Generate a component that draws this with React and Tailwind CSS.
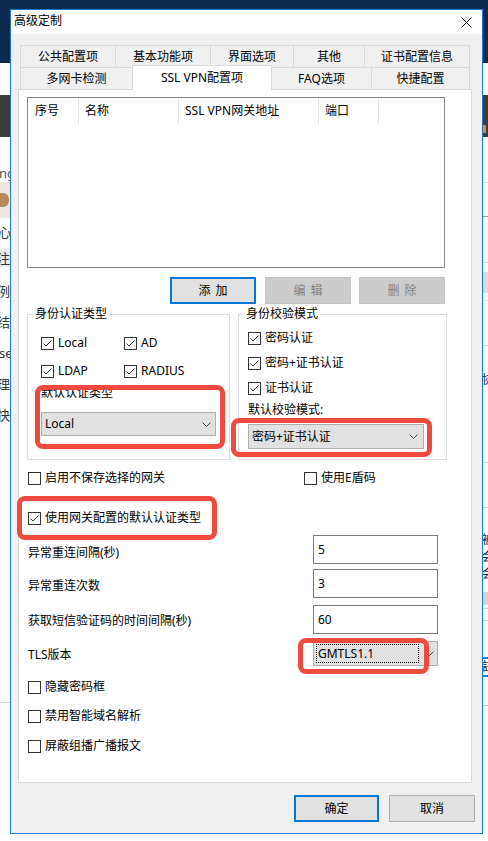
import React from "react";

function Check({ checked }) {
  return (
    <span className="w-[13px] h-[13px] border border-[#333333] bg-white flex items-center justify-center shrink-0">
      {checked && (
        <svg width="11" height="11" viewBox="0 0 11 11">
          <polyline points="1.5,5.5 4,8 9.5,2.5" fill="none" stroke="#333333" strokeWidth="1" />
        </svg>
      )}
    </span>
  );
}

function CheckLabel({ checked, children, className = "" }) {
  return (
    <div className={"flex items-center gap-[4px] h-[20px] " + className}>
      <Check checked={checked} />
      <span>{children}</span>
    </div>
  );
}

function Chevron() {
  return (
    <svg width="9" height="5" viewBox="0 0 9 5" className="shrink-0">
      <polyline points="0.5,0.5 4.5,4.5 8.5,0.5" fill="none" stroke="#404040" strokeWidth="1" />
    </svg>
  );
}

function LeftStrip() {
  return (
    <div className="w-[40px] flex flex-col text-[13px] leading-[16px] text-[#333333] overflow-hidden">
      <div className="h-[27px]" />
      <div className="h-[18px] flex items-center text-[#555555] -ml-[1px]">ng</div>
      <div className="h-[36px] bg-[#efe6dc] flex items-center">
        <div className="w-[9px] h-[14px] bg-[#b98a5e] rounded-r-[6px]" />
      </div>
      <div className="h-[28px] flex items-center -ml-[2px]">心</div>
      <div className="h-[2px]" />
      <div className="h-[19px] bg-[#ebebeb] flex items-center -ml-[3px]">注</div>
      <div className="h-[8px]" />
      <div className="h-[31px] flex items-center -ml-[3px]">例</div>
      <div className="h-[31px] flex items-center -ml-[3px]">结</div>
      <div className="h-[31px] flex items-center -ml-[1px]">se</div>
      <div className="h-[31px] flex items-center -ml-[3px]">理</div>
      <div className="h-[31px] flex items-center -ml-[3px]">快</div>
      <div className="h-[272px]" />
      <div className="h-[1px] bg-[#d5d5d5]" />
    </div>
  );
}

function RightStrip() {
  return (
    <div className="w-[6px] flex flex-col text-[12px] leading-[16px] text-[#222222] overflow-hidden">
      <div className="h-[45px]" />
      <div className="h-[1px] bg-[#e3e3e3]" />
      <div className="h-[33px]" />
      <div className="h-[1px] bg-[#9a9a9a]" />
      <div className="h-[45px] bg-[#fafafa]" />
      <div className="h-[1px] bg-[#e0e0e0]" />
      <div className="h-[9px]" />
      <div className="h-[21px] bg-[#dcdcdc]" />
      <div className="h-[7px]" />
      <div className="h-[1px] bg-[#e0e0e0]" />
      <div className="h-[44px]" />
      <div className="h-[1px] bg-[#cfcfcf]" />
      <div className="h-[26px]" />
      <div className="h-[16px]">协</div>
      <div className="h-[74px]" />
      <div className="h-[1px] bg-[#d0d0d0]" />
      <div className="h-[44px]" />
      <div className="h-[1px] bg-[#d0d0d0]" />
      <div className="h-[24px]" />
      <div className="h-[17px]">被</div>
      <div className="h-[17px]">会</div>
      <div className="h-[17px]">会</div>
      <div className="h-[9px]" />
      <div className="h-[13px] bg-[#d4d4d4]" />
      <div className="h-[3px]" />
      <div className="h-[1px] bg-[#d0d0d0]" />
      <div className="h-[11px]" />
      <div className="h-[1px] bg-[#d0d0d0]" />
      <div className="h-[36px]" />
      <div className="h-[2px] bg-[#1a7fd4]" />
      <div className="h-[16px]">註</div>
      <div className="h-[2px] bg-[#1a7fd4]" />
      <div className="h-[28px]" />
      <div className="h-[1px] bg-[#c8c8c8]" />
    </div>
  );
}

function Tab({ w, children, last }) {
  return (
    <div
      className={
        "h-[22px] border-l border-t border-[#d9d9d9] flex items-center justify-center " +
        w +
        (last ? " border-r" : "")
      }
    >
      {children}
    </div>
  );
}

function Dialog() {
  return (
    <div className="absolute left-[10px] top-[9px] w-[473px] h-[825px] border border-[#1a7ad4] bg-[#f0f0f0] flex flex-col">
      {/* title bar */}
      <div className="h-[24px] bg-white flex items-center justify-between pl-[3px] pr-[10px] shrink-0">
        <span className="pb-[2px]">高级定制</span>
        <svg width="11" height="11" viewBox="0 0 11 11">
          <path d="M0.5 0.5 L10.5 10.5 M10.5 0.5 L0.5 10.5" stroke="#000000" strokeWidth="1" fill="none" />
        </svg>
      </div>

      <div className="pt-[11px] pl-[7px]">
        <div className="w-[454px]">
          <div className="ml-[2px] w-[450px]">
            <div className="flex">
              <Tab w="w-[95px]">公共配置项</Tab>
              <Tab w="w-[95px]">基本功能项</Tab>
              <Tab w="w-[83px]">界面选项</Tab>
              <Tab w="w-[71px]">其他</Tab>
              <Tab w="w-[106px]" last>证书配置信息</Tab>
            </div>
            <div className="flex items-start h-[22px]">
              <div className="w-[112px] h-[22px] border-l border-t border-[#d9d9d9] flex items-center justify-center">
                多网卡检测
              </div>
              <div className="w-[140px] h-[25px] -mt-[2px] relative z-10 bg-white border-l border-t border-r border-[#d9d9d9] flex items-center justify-center">
                SSL VPN配置项
              </div>
              <div className="w-[99px] h-[22px] border-t border-[#d9d9d9] flex items-center justify-center">
                FAQ选项
              </div>
              <div className="w-[99px] h-[22px] border-l border-t border-r border-[#d9d9d9] flex items-center justify-center">
                快捷配置
              </div>
            </div>
          </div>

          {/* panel */}
          <div className="h-[694px] border border-[#d9d9d9] bg-white pt-[7px]">
            <div className="ml-[8px] w-[418px] h-[171px] border border-[#828790] bg-white">
              <div className="flex h-[26px]">
                <div className="w-[51px] h-full border-r border-[#e5e5e5] pl-[7px] flex items-center">序号</div>
                <div className="w-[100px] h-full border-r border-[#e5e5e5] pl-[6px] flex items-center">名称</div>
                <div className="w-[140px] h-full border-r border-[#e5e5e5] pl-[6px] flex items-center">SSL VPN网关地址</div>
                <div className="w-[60px] h-full border-r border-[#e5e5e5] pl-[6px] flex items-center">端口</div>
              </div>
            </div>

            {/* list buttons */}
            <div className="mt-[9px] flex justify-end pr-[26px]">
              <div className="w-[86px] h-[27px] border-2 border-[#0078d7] bg-[#e1e1e1] flex items-center justify-center gap-[5px]">
                <span>添</span>
                <span>加</span>
              </div>
              <div className="ml-[9px] w-[86px] h-[27px] border border-[#c4c4c4] bg-[#cccccc] text-[#838383] flex items-center justify-center gap-[5px]">
                <span>编</span>
                <span>辑</span>
              </div>
              <div className="ml-[8px] w-[86px] h-[27px] border border-[#c4c4c4] bg-[#cccccc] text-[#838383] flex items-center justify-center gap-[5px]">
                <span>删</span>
                <span>除</span>
              </div>
            </div>

            {/* groups */}
            <div className="flex gap-[8px] ml-[8px] mt-[3px]">
              <fieldset className="w-[203px] h-[153px] border border-[#dcdcdc]">
                <legend className="ml-[5px] px-[2px] leading-[14px]">身份认证类型</legend>
                <div className="mt-[12px] flex pl-[13px]">
                  <CheckLabel checked className="w-[83px]">Local</CheckLabel>
                  <CheckLabel checked>AD</CheckLabel>
                </div>
                <div className="mt-[8px] flex pl-[13px]">
                  <CheckLabel checked className="w-[83px]">LDAP</CheckLabel>
                  <CheckLabel checked>RADIUS</CheckLabel>
                </div>
                <div className="mt-[5px] h-[14px] pl-[13px]">默认认证类型</div>
                <div className="mt-[12px] ml-[13px] w-[175px] h-[24px] border border-[#adadad] bg-[#e1e1e1] flex items-center justify-between pl-[3px] pr-[4px]">
                  <span>Local</span>
                  <Chevron />
                </div>
              </fieldset>

              <fieldset className="w-[209px] h-[153px] border border-[#dcdcdc]">
                <legend className="ml-[5px] px-[2px] leading-[14px]">身份校验模式</legend>
                <div className="mt-[7px] pl-[9px] flex flex-col gap-[5px]">
                  <CheckLabel checked>密码认证</CheckLabel>
                  <CheckLabel checked>密码+证书认证</CheckLabel>
                  <CheckLabel checked>证书认证</CheckLabel>
                </div>
                <div className="mt-[5px] h-[14px] pl-[9px]">默认校验模式:</div>
                <div className="mt-[7px] ml-[9px] w-[176px] h-[25px] border border-[#adadad] bg-[#e1e1e1] flex items-center justify-between pl-[3px] pr-[5px]">
                  <span>密码+证书认证</span>
                  <Chevron />
                </div>
              </fieldset>
            </div>

            {/* options */}
            <div className="pl-[9px]">
              <div className="mt-[8px] flex">
                <CheckLabel className="w-[276px]">启用不保存选择的网关</CheckLabel>
                <CheckLabel>使用E盾码</CheckLabel>
              </div>
              <div className="mt-[20px] flex">
                <CheckLabel checked>使用网关配置的默认认证类型</CheckLabel>
              </div>

              <div className="mt-[7px] h-[29px] flex">
                <div className="w-[285px] flex items-center pt-[7px]">异常重连间隔(秒)</div>
                <div className="w-[125px] h-full border border-[#7a7a7a] bg-white pl-[4px] flex items-center">5</div>
              </div>
              <div className="mt-[5px] h-[29px] flex">
                <div className="w-[285px] flex items-center pt-[4px]">异常重连次数</div>
                <div className="w-[125px] h-full border border-[#7a7a7a] bg-white pl-[4px] flex items-center">3</div>
              </div>
              <div className="mt-[7px] h-[29px] flex">
                <div className="w-[285px] flex items-center pt-[2px]">获取短信验证码的时间间隔(秒)</div>
                <div className="w-[125px] h-full border border-[#7a7a7a] bg-white pl-[4px] flex items-center">60</div>
              </div>
              <div className="mt-[7px] h-[25px] flex">
                <div className="w-[285px] flex items-center pt-[3px]">TLS版本</div>
                <div className="w-[125px] h-full border border-[#adadad] bg-[#e1e1e1] p-[2px] flex items-center">
                  <div className="w-[103px] h-full border border-dotted border-black flex items-center pl-[1px]">GMTLS1.1</div>
                  <div className="flex-1 flex justify-center pl-[4px]">
                    <Chevron />
                  </div>
                </div>
              </div>

              <CheckLabel className="mt-[11px]">隐藏密码框</CheckLabel>
              <CheckLabel className="mt-[9px]">禁用智能域名解析</CheckLabel>
              <CheckLabel className="mt-[10px]">屏蔽组播广播报文</CheckLabel>
            </div>
          </div>
        </div>
      </div>

      {/* footer buttons */}
      <div className="mt-[12px] flex justify-end pr-[7px] gap-[10px]">
        <div className="w-[85px] h-[27px] border-2 border-[#0078d7] bg-[#e1e1e1] flex items-center justify-center">确定</div>
        <div className="w-[86px] h-[27px] border border-[#adadad] bg-[#e1e1e1] flex items-center justify-center">取消</div>
      </div>
    </div>
  );
}

function Mark({ className }) {
  return <div className={"absolute border-[5px] border-[#ef4a3e] rounded-[8px] " + className} />;
}

export default function App() {
  return (
    <div className="relative w-[488px] h-[841px] overflow-hidden bg-white font-['Noto_Sans','Noto_Sans_CJK_SC',sans-serif] text-[12px] leading-[14px] text-black">
      <div className="flex flex-col h-full">
        <div className="h-[63px] bg-[#0d2b4e] shrink-0" />
        <div className="h-[32px] bg-white shrink-0" />
        <div className="h-[42px] bg-[#3b3b3b] shrink-0 flex justify-end items-end pb-[4px] pr-[2px]">
          <div className="w-[3px] h-[8px] bg-[#e08a2c]" />
        </div>
        <div className="flex flex-1">
          <LeftStrip />
          <div className="flex-1" />
          <RightStrip />
        </div>
      </div>

      <Dialog />

      <Mark className="left-[35px] top-[385px] w-[190px] h-[64px]" />
      <Mark className="left-[231px] top-[418px] w-[201px] h-[39px]" />
      <Mark className="left-[17px] top-[496px] w-[200px] h-[44px]" />
      <Mark className="left-[298px] top-[638px] w-[131px] h-[36px]" />
    </div>
  );
}
